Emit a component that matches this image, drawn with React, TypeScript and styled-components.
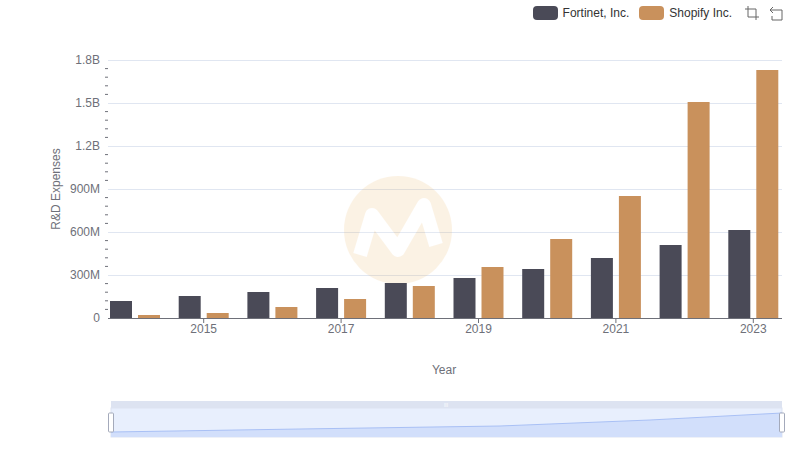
import React from "react";
import styled, { createGlobalStyle } from "styled-components";

const Global = createGlobalStyle`
  html, body { margin: 0; padding: 0; background: #fff; }
  body { font-family: "Liberation Sans", Arial, sans-serif; }
`;

const Page = styled.div`
  width: 800px; height: 461px; position: relative; overflow: hidden;
  display: flex; flex-direction: column;
`;
const Legend = styled.div`
  display: flex; justify-content: flex-end; align-items: center; gap: 10px;
  height: 26px; padding: 0 16px 0 0; font-size: 12px; color: #333;
`;
const Item = styled.div`display: flex; align-items: center; gap: 5px;`;
const Swatch = styled.span<{ c: string }>`
  width: 25px; height: 14px; border-radius: 4px; background: ${p => p.c}; display: inline-block;
`;
const Tools = styled.div`display: flex; gap: 8px; margin-left: 2px;`;
const ChartSvg = styled.svg`position: absolute; left: 0; top: 0;`;

const F = [17, 22, 26, 30, 35, 40, 49, 60, 73, 88];
const S = [3, 5, 11, 19, 32, 51, 79, 122, 216, 248];
const base = 318;

export default function App() {
  const grid = [0, 1, 2, 3, 4, 5, 6];
  const labels = ["0", "300M", "600M", "900M", "1.2B", "1.5B", "1.8B"];
  return (
    <Page>
      <Global />
      <ChartSvg width={800} height={461}>
        {grid.map(i => {
          const y = base - i * 43;
          return (
            <g key={i}>
              {i > 0 && <line x1={108} x2={782} y1={y + 0.5} y2={y + 0.5} stroke="#e0e6f1" />}
              <text x={100} y={y + 4} textAnchor="end" fontSize={12} fill="#6e7079">{labels[i]}</text>
            </g>
          );
        })}
        {Array.from({ length: 31 }).map((_, k) => (
          k % 5 === 0 ? null :
          <line key={k} x1={105} x2={108} y1={base - k * 8.6} y2={base - k * 8.6} stroke="#6e7079" />
        ))}
        <text transform="translate(60,189) rotate(-90)" textAnchor="middle" fontSize={12} fill="#6e7079">R&amp;D Expenses</text>
        <g opacity={0.13}>
          <circle cx={398} cy={230} r={54} fill="#e8a33a" />
          <path d="M360 255 L372 215 L398 250 L424 205 L436 245" fill="none" stroke="#fff" strokeWidth={14} strokeLinejoin="round" />
        </g>
        {F.map((h, i) => {
          const x = 110 + i * 68.7;
          return (
            <g key={i}>
              <rect x={x} y={base - h} width={22} height={h} fill="#4a4a57" />
              <rect x={x + 28} y={base - S[i]} width={22} height={S[i]} fill="#c9915c" />
              {i % 2 === 1 && (
                <>
                  <line x1={x + 25} x2={x + 25} y1={base} y2={base + 5} stroke="#6e7079" />
                  <text x={x + 25} y={base + 15} textAnchor="middle" fontSize={12} fill="#6e7079">{2014 + i}</text>
                </>
              )}
            </g>
          );
        })}
        <line x1={108} x2={782} y1={base + 0.5} y2={base + 0.5} stroke="#6e7079" />
        <text x={444} y={374} textAnchor="middle" fontSize={12} fill="#6e7079">Year</text>
        <rect x={111} y={401} width={671} height={7} fill="#dde3f1" />
        <rect x={111} y={408} width={671} height={29} fill="#e8effd" stroke="#dde3f1" />
        <path d="M111 432 L300 429 L500 426 L650 420 L782 413 L782 437 L111 437 Z" fill="#d2dffb" />
        <path d="M111 432 L300 429 L500 426 L650 420 L782 413" fill="none" stroke="#a9c0f5" />
        <text x={446} y={407} textAnchor="middle" fontSize={5} fill="#fff">III</text>
        <rect x={108.5} y={413} width={5} height={19} fill="#fff" stroke="#a4aabb" rx={1} />
        <rect x={779.5} y={413} width={5} height={19} fill="#fff" stroke="#a4aabb" rx={1} />
      </ChartSvg>
      <Legend style={{ position: "relative" }}>
        <Item><Swatch c="#4a4a57" />Fortinet, Inc.</Item>
        <Item><Swatch c="#c9915c" />Shopify Inc.</Item>
        <Tools>
          <svg width={16} height={16} viewBox="0 0 16 16" fill="none" stroke="#666">
            <path d="M1 4H12V15M4 1V12H15" />
          </svg>
          <svg width={16} height={16} viewBox="0 0 16 16" fill="none" stroke="#666">
            <path d="M5 2L2 5L5 8M2 5H14V15H4V11" />
          </svg>
        </Tools>
      </Legend>
    </Page>
  );
}
